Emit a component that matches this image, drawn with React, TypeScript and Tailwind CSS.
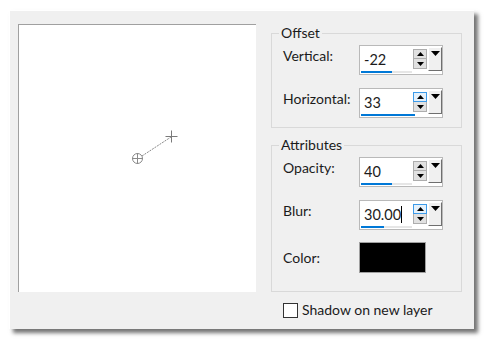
import React from "react";

const font = { fontFamily: 'Lato, "Noto Sans", sans-serif' };

function UpArrow() {
  return (
    <svg width="7" height="4" viewBox="0 0 7 4"><polygon points="0,4 7,4 3.5,0" fill="#000" /></svg>
  );
}
function DownArrow() {
  return (
    <svg width="7" height="4" viewBox="0 0 7 4"><polygon points="0,0 7,0 3.5,4" fill="#000" /></svg>
  );
}

function SpinField({ value, bar, hl, caret }: { value: string; bar: number; hl?: boolean; caret?: boolean }) {
  return (
    <div className="flex h-[30px] w-[84px] border border-[#b9b9b9] bg-white">
      <div className="flex w-[53px] flex-col">
        <div className="flex h-[23px] items-end pl-[4px] text-[14.5px] leading-[18px] text-[#1b1b1b]">
          <span>{value}</span>
          {caret && <span className="mb-[1px] h-[17px] w-px bg-black" />}
        </div>
        <div className="ml-[1px] mt-[2px] h-[2px] w-[51px] bg-[#e6e6e6]">
          <div className="h-full bg-[#0078d7]" style={{ width: bar }} />
        </div>
      </div>
      <div className="mt-[3px] flex flex-col">
        <div className={`flex h-[10px] w-[14px] items-center justify-center border ${hl ? "border-[#3c9bea] bg-[#e5f1fb]" : "border-[#adadad] bg-[#e1e1e1]"}`}>
          <UpArrow />
        </div>
        <div className="flex h-[10px] w-[14px] items-center justify-center border border-t-0 border-[#adadad] bg-[#e1e1e1]">
          <DownArrow />
        </div>
      </div>
      <div className="ml-[1px] mt-[1px] flex h-[24px] w-[14px] justify-center border border-r-[#6f6f6f] border-b-[#6f6f6f] border-l-white border-t-white bg-[#f0f0f0] pt-[3px]">
        <svg width="9" height="5" viewBox="0 0 9 5"><polygon points="0,0 9,0 4.5,5" fill="#000" /></svg>
      </div>
    </div>
  );
}

function Row({ label, children }: { label: string; children: React.ReactNode }) {
  return (
    <div className="flex items-start">
      <div className="w-[76px] pt-[2px] text-[14px] leading-[18px] text-[#1b1b1b]">{label}</div>
      {children}
    </div>
  );
}

export default function App() {
  return (
    <div className="h-[340px] w-[485px] bg-white pl-[9px] pt-[10px]" style={font}>
      <div className="flex h-[319px] w-[465px] border-l border-t border-white bg-[#f0f0f0] pl-[8px] pt-[13px] shadow-[4px_4px_4px_rgba(0,0,0,0.55)]">
        <div className="relative h-[268px] w-[238px] border-l border-t border-[#a0a0a0] bg-white">
          <svg width="238" height="268" className="block">
            <line x1="123" y1="131" x2="152" y2="112" stroke="#8a8a8a" strokeWidth="1" strokeDasharray="2 1" />
            <circle cx="118.5" cy="133.5" r="5" fill="none" stroke="#8a8a8a" strokeWidth="1" />
            <line x1="113" y1="133.5" x2="124" y2="133.5" stroke="#8a8a8a" strokeWidth="1" />
            <line x1="118.5" y1="128" x2="118.5" y2="139" stroke="#8a8a8a" strokeWidth="1" />
            <line x1="146.5" y1="111.5" x2="158.5" y2="111.5" stroke="#7a7a7a" strokeWidth="1" />
            <line x1="152.5" y1="105.5" x2="152.5" y2="117.5" stroke="#7a7a7a" strokeWidth="1" />
          </svg>
        </div>
        <div className="ml-[15px] flex w-[191px] flex-col">
          <fieldset className="h-[104px] border border-[#d9d9d9] pl-[11px]">
            <legend className="-ml-[4px] px-[2px] text-[14px] leading-[18px] text-[#1b1b1b]">Offset</legend>
            <div className="mt-[3px] flex flex-col gap-[13px]">
              <Row label="Vertical:">
                <SpinField value="-22" bar={31} />
              </Row>
              <Row label="Horizontal:">
                <SpinField value="33" bar={54} hl />
              </Row>
            </div>
          </fieldset>
          <fieldset className="mt-[8px] h-[156px] border border-[#d9d9d9] pl-[11px]">
            <legend className="-ml-[4px] px-[2px] text-[14px] leading-[18px] text-[#1b1b1b]">Attributes</legend>
            <div className="mt-[3px] flex flex-col gap-[13px]">
              <Row label="Opacity:">
                <SpinField value="40" bar={31} />
              </Row>
              <Row label="Blur:">
                <SpinField value="30.00" bar={23} hl caret />
              </Row>
              <div className="flex items-center">
                <div className="w-[76px] text-[14px] leading-[18px] text-[#1b1b1b]">Color:</div>
                <div className="-mt-[1px] h-[31px] w-[67px] border border-[#a0a0a0] bg-black" />
              </div>
            </div>
          </fieldset>
          <div className="ml-[12px] mt-[9px] flex items-center gap-[4px]">
            <div className="h-[15px] w-[15px] border border-[#333] bg-white" />
            <span className="text-[14px] leading-[18px] text-[#1b1b1b]">Shadow on new layer</span>
          </div>
        </div>
      </div>
    </div>
  );
}
